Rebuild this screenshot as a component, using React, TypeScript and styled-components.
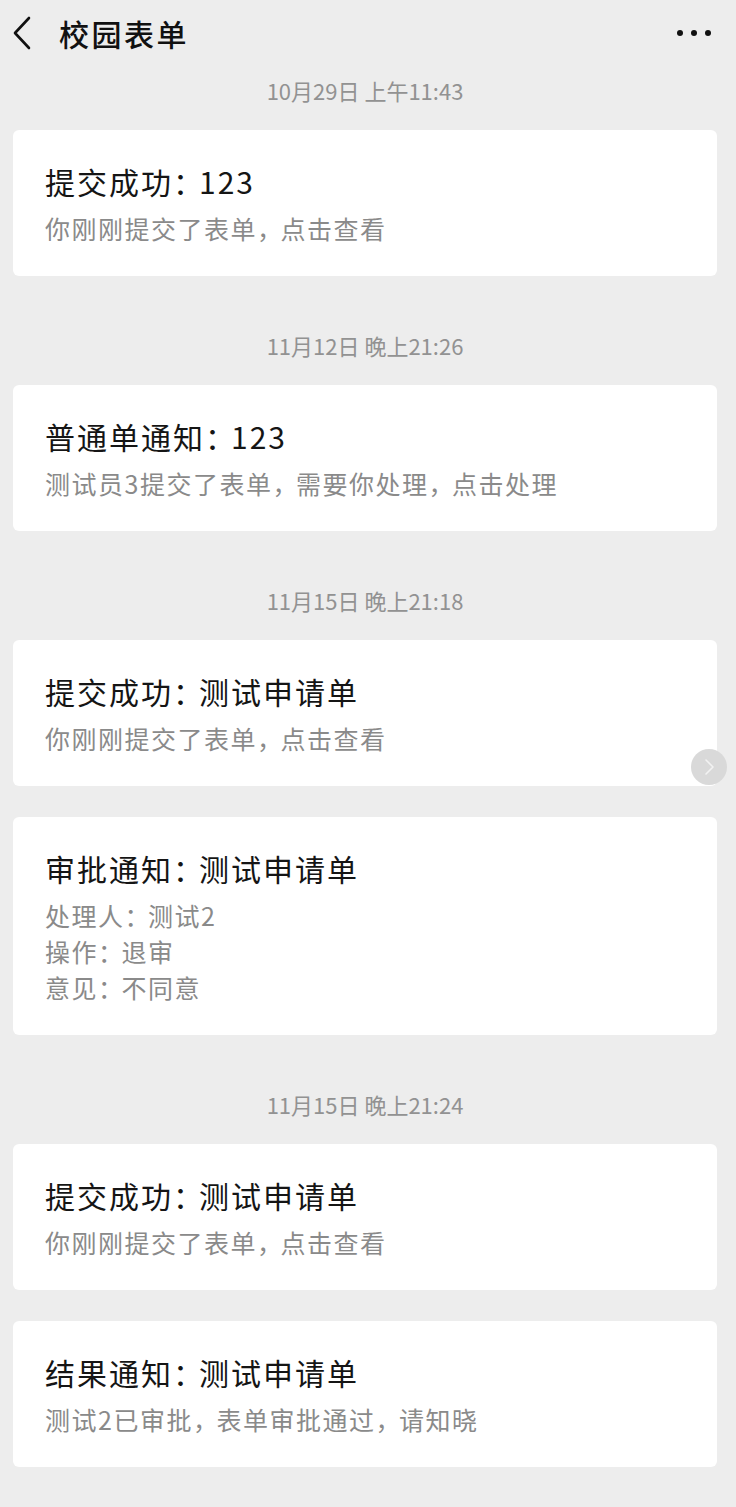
import React from "react";
import styled, { createGlobalStyle } from "styled-components";

const Global = createGlobalStyle`
  html, body { margin: 0; padding: 0; background: #ededed; }
  body { font-family: "Noto Sans CJK SC", "Noto Sans", sans-serif; }
  * { box-sizing: border-box; }
`;

const Page = styled.div`
  width: 736px;
  min-height: 1507px;
  background: #ededed;
  position: relative;
  padding-bottom: 40px;
`;

const Header = styled.header`
  height: 66px;
  display: flex;
  align-items: center;
  padding: 0 24px 0 10px;
`;

const Back = styled.div`
  width: 24px;
  height: 36px;
  display: flex;
  align-items: center;
  justify-content: center;
`;

const Title = styled.h1`
  margin: 0 0 0 25px;
  font-size: 30px;
  font-weight: 500;
  letter-spacing: 2.5px;
  color: #111;
  flex: 1;
  line-height: 40px;
`;

const Feed = styled.main`
  margin: 0 19px 0 13px;
  display: flex;
  flex-direction: column;
`;

const Group = styled.section<{ $first?: boolean }>`
  display: flex;
  flex-direction: column;
  gap: 31px;
  margin-top: ${(p) => (p.$first ? "9px" : "54px")};
`;

const Stamp = styled.div`
  text-align: center;
  font-size: 22px;
  height: 30px;
  line-height: 30px;
  color: #929292;
  margin-bottom: -6px;
`;

const Card = styled.div`
  background: #fff;
  border-radius: 6px;
  padding: 31px 32px 30px;
`;

const CardTitle = styled.div`
  font-size: 30px;
  line-height: 40px;
  letter-spacing: 2px;
  color: #151515;
  margin-bottom: 9px;
`;

const Line = styled.div`
  font-size: 25px;
  line-height: 36px;
  letter-spacing: 1.5px;
  color: #8a8a8a;
`;

const Punct = styled.span<{ $spacing: number }>`
  letter-spacing: ${(p) => p.$spacing}px;
`;

const Floater = styled.div`
  position: absolute;
  left: 691px;
  top: 749px;
  width: 36px;
  height: 36px;
  border-radius: 50%;
  background: #d9d9d9;
  display: flex;
  align-items: center;
  justify-content: center;
`;

function Tight({ text, spacing }: { text: string; spacing: number }) {
  const parts = text.split(/([：，])/);
  return (
    <>
      {parts.map((p, i) =>
        p === "：" || p === "，" ? (
          <Punct key={i} $spacing={spacing}>
            {p}
          </Punct>
        ) : (
          <React.Fragment key={i}>{p}</React.Fragment>
        )
      )}
    </>
  );
}

type Msg = { title: string; lines: string[] };
type Grp = { stamp: string; msgs: Msg[] };

const data: Grp[] = [
  {
    stamp: "10月29日 上午11:43",
    msgs: [{ title: "提交成功：123", lines: ["你刚刚提交了表单，点击查看"] }],
  },
  {
    stamp: "11月12日 晚上21:26",
    msgs: [
      {
        title: "普通单通知：123",
        lines: ["测试员3提交了表单，需要你处理，点击处理"],
      },
    ],
  },
  {
    stamp: "11月15日 晚上21:18",
    msgs: [
      { title: "提交成功：测试申请单", lines: ["你刚刚提交了表单，点击查看"] },
      {
        title: "审批通知：测试申请单",
        lines: ["处理人：测试2", "操作：退审", "意见：不同意"],
      },
    ],
  },
  {
    stamp: "11月15日 晚上21:24",
    msgs: [
      { title: "提交成功：测试申请单", lines: ["你刚刚提交了表单，点击查看"] },
      {
        title: "结果通知：测试申请单",
        lines: ["测试2已审批，表单审批通过，请知晓"],
      },
    ],
  },
];

export default function App() {
  return (
    <Page>
      <Global />
      <Header>
        <Back>
          <svg width="20" height="34" viewBox="0 0 20 34">
            <polyline
              points="17,2 3,17 17,32"
              fill="none"
              stroke="#111"
              strokeWidth="2.6"
              strokeLinecap="round"
              strokeLinejoin="round"
            />
          </svg>
        </Back>
        <Title>校园表单</Title>
        <svg width="36" height="8" viewBox="0 0 36 8">
          <circle cx="4" cy="4" r="3" fill="#111" />
          <circle cx="18" cy="4" r="3" fill="#111" />
          <circle cx="32" cy="4" r="3" fill="#111" />
        </svg>
      </Header>
      <Feed>
        {data.map((g, i) => (
          <Group key={i} $first={i === 0}>
            <Stamp>{g.stamp}</Stamp>
            {g.msgs.map((m, j) => (
              <Card key={j}>
                <CardTitle>
                  <Tight text={m.title} spacing={-4} />
                </CardTitle>
                {m.lines.map((l, k) => (
                  <Line key={k}>
                    <Tight text={l} spacing={-1.5} />
                  </Line>
                ))}
              </Card>
            ))}
          </Group>
        ))}
      </Feed>
      <Floater>
        <svg width="12" height="18" viewBox="0 0 12 18">
          <polyline
            points="3,2 10,9 3,16"
            fill="none"
            stroke="#f2f2f2"
            strokeWidth="1.6"
            strokeLinecap="round"
            strokeLinejoin="round"
          />
        </svg>
      </Floater>
    </Page>
  );
}
